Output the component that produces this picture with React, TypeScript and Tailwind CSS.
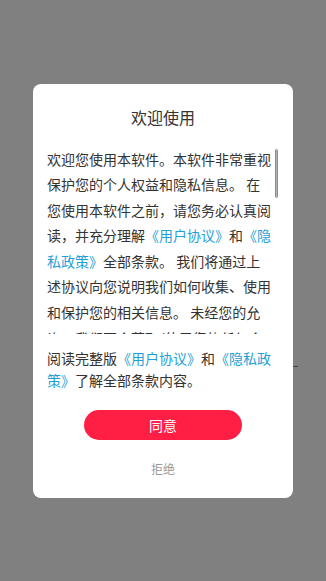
import React from 'react';

const font = { fontFamily: '"Noto Sans CJK SC", "Noto Sans", sans-serif' };

function Link({ children }: { children: React.ReactNode }) {
    return <span className="text-[#1f9fd5]">{children}</span>;
}

export default function App() {
    return (
        <div className="relative min-h-[581px] w-full bg-[#808080] flex items-center justify-center" style={font}>
            <div className="w-[260px] h-[414px] bg-white rounded-lg flex flex-col px-[14px] pt-[22px] pb-[19px]">
                <h1 className="text-center text-[16px] leading-[22px] text-[#333]">欢迎使用</h1>

                <div className="relative mt-[19px] h-[187px] overflow-hidden">
                    <p className="w-[226px] text-[14px] leading-[25.6px] text-[#333]">
                        欢迎您使用本软件。本软件非常重视保护您的个人权益和隐私信息。 在您使用本软件之前，请您务必认真阅读，并充分理解<Link>《用户协议》</Link>和<Link>《隐私政策》</Link>全部条款。 我们将通过上述协议向您说明我们如何收集、使用和保护您的相关信息。 未经您的允许，我们不会获取/使用您的任何个人信息，也不会向第三方提供您的信息。
                    </p>
                    <div className="absolute right-[1px] top-[2px] h-[49px] w-[3px] rounded-full bg-[#b5b5b5] border border-[#8a8a8a]" />
                </div>

                <p className="mt-[13px] w-[226px] text-[14px] leading-[22px] text-[#333]">
                    阅读完整版<Link>《用户协议》</Link>和<Link>《隐私政策》</Link>了解全部条款内容。
                </p>

                <button className="mt-[19px] mx-auto w-[158px] h-[30px] rounded-full bg-[#ff1f45] text-white text-[14px] leading-[30px]">
                    同意
                </button>

                <button className="mt-[19px] mx-auto text-[12px] leading-[20px] text-[#999]">拒绝</button>
            </div>
            <div className="absolute left-[293px] top-[366px] w-[5px] h-px bg-[#444]" />
        </div>
    );
}
